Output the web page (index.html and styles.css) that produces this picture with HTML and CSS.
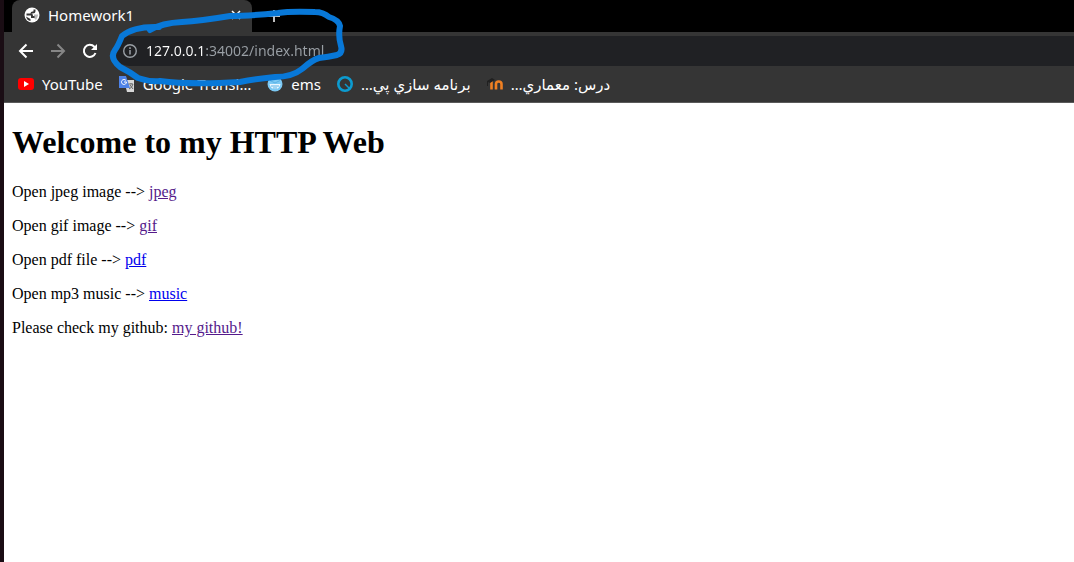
FILE: index.html
```html
<!DOCTYPE html>
<html lang="en">
<head>
<meta charset="utf-8">
<title>Homework1</title>
<link rel="stylesheet" href="styles.css">
</head>
<body>
<div class="browser">
  <header class="chrome">
    <div class="tabs">
      <div class="tab">
        <svg class="icon" viewBox="0 0 16 16"><circle cx="8" cy="8" r="7.500" fill="#fff"/><path d="M2.500 7.500H7q1 0 1 1.200V10h2.500M10.500 2.500V4q0 1.500-2 1.500-1 0-1 1" fill="none" stroke="#353535" stroke-width="2"/><path d="M10 7.500h4.200q-.5 3-2.200 5.500L10 11Z" fill="#353535" opacity=".35"/><path d="M2 9.500 6.500 12v2Q3 13.500 2 9.500Z" fill="#353535"/></svg>
        <span class="tab-title">Homework1</span>
        <button class="tab-button" aria-label="Close tab"><svg class="icon" viewBox="0 0 16 16"><path d="m4 4 8 8m0-8-8 8" stroke="#fff" stroke-width="1.500"/></svg></button>
      </div>
      <button class="tab-button new-tab" aria-label="New tab"><svg class="icon" viewBox="0 0 16 16"><path d="M8 2v12M2 8h12" stroke="#fff" stroke-width="1.500"/></svg></button>
    </div>
    <div class="toolbar">
      <button class="nav" aria-label="Back"><svg class="icon" viewBox="0 0 16 16"><path d="M15 8H2m6.500-6.500L2 8l6.500 6.500" fill="none" stroke="#fff" stroke-width="2"/></svg></button>
      <button class="nav" aria-label="Forward"><svg class="icon" viewBox="0 0 16 16"><path d="M1 8h13M7.500 1.500 14 8l-6.500 6.500" fill="none" stroke="#868686" stroke-width="2"/></svg></button>
      <button class="nav" aria-label="Reload"><svg class="icon" viewBox="0 0 16 16"><path d="M13.500 10A6 6 0 1 1 12.300 3.800L14 5.500" fill="none" stroke="#fff" stroke-width="2"/><path d="M15 1v6H9Z" fill="#fff"/></svg></button>
      <div class="omnibox">
        <svg class="icon" viewBox="0 0 16 16"><circle cx="8" cy="8" r="6.300" fill="none" stroke="#9aa0a6" stroke-width="1.400"/><path d="M8 7v4.500M8 4.300V6" stroke="#9aa0a6" stroke-width="1.500"/></svg>
        <input class="url" type="text" aria-label="Address" value="127.0.0.1:34002/index.html">
      </div>
    </div>
    <nav class="bookmarks">
      <a class="bookmark" href="#"><svg class="icon" viewBox="0 0 16 16"><rect y="2" width="16" height="12" rx="3" fill="#f00"/><path d="m6 5 5 3-5 3Z" fill="#fff"/></svg>YouTube</a>
      <a class="bookmark" href="#"><svg class="icon" viewBox="0 0 16 16"><path d="M5 4h10v12H8Z" fill="#d8d8d8"/><path d="M0 0h7l4 12H0Z" fill="#4e83e8"/><path d="M7 4.500A2.500 2.500 0 1 0 7.500 6H5" fill="none" stroke="#fff"/><path d="M9.500 8H14m-2-1v1m2 0q-1 4-4 5m1-4 3 4" fill="none" stroke="#666"/></svg>Google Transl…</a>
      <a class="bookmark" href="#"><svg class="icon" viewBox="0 0 16 16"><circle cx="8" cy="8" r="7.500" fill="#7cc9f4"/><path d="M2.500 8h11q-1 5-5.500 5T2.500 8Z" fill="#eaf7ff"/><path d="M3 4.500 8 7l5-2.500M4 10h8M6 12h4" fill="none" stroke="#5ab1e4"/></svg>ems</a>
      <a class="bookmark" href="#"><svg class="icon" viewBox="0 0 16 16"><circle cx="8" cy="8" r="6.700" fill="none" stroke="#0c9bd0" stroke-width="2.600"/><path d="m8 8 4 4" stroke="#0c9bd0" stroke-width="1.500"/></svg><bdi lang="fa">برنامه سازي پي…</bdi></a>
      <a class="bookmark" href="#"><svg class="icon" viewBox="0 0 16 16"><path d="M4.500 13.500V5m4.500 8.500V8q0-2.500 2.700-2.500T14.500 8v5.500" fill="none" stroke="#f08022" stroke-width="2.600"/><path d="m0 5 5-3 3 2-5 3-2-1v4H0Z" fill="#202020"/></svg><bdi lang="fa">درس: معماري…</bdi></a>
    </nav>
    <svg class="scribble" viewBox="0 0 250 90" aria-hidden="true"><path d="M59 27Q34 26 22 36Q18 46 15 50Q9 58 20 67Q30 72 38 78Q50 82 60 81Q90 85 140 82Q155 79 175 77Q192 77 202 69Q212 60 219 58Q228 57 237 55Q243 53 241 46Q238 36 240 26Q239 20 229 17Q223 12 215 12Q190 11 178 13Q148 16 130 16Q100 21 82 22Q62 23 50 30"/></svg>
  </header>
  <main class="page">
    <h1>Welcome to my HTTP Web</h1>
    <p>Open jpeg image --&gt; <a class="seen" href="#">jpeg</a></p>
    <p>Open gif image --&gt; <a class="seen" href="#">gif</a></p>
    <p>Open pdf file --&gt; <a class="fresh" href="#">pdf</a></p>
    <p>Open mp3 music --&gt; <a class="fresh" href="#">music</a></p>
    <p>Please check my github: <a class="seen" href="#">my github!</a></p>
  </main>
</div>
</body>
</html>
```
FILE: styles.css
```css
* { box-sizing: border-box; }
body { margin: 0; background: #fff; }
button { padding: 0; border: 0; background: none; }
.icon { display: block; flex: none; width: 16px; height: 16px; }
.browser { min-height: 100vh; border-left: 4px solid #1a0d14; }
.chrome {
  position: relative;
  background: #353535;
  border-bottom: 1px solid #5a5a5a;
  color: #fff;
  font: 15px/20px "Noto Sans", "DejaVu Sans", sans-serif;
}
.tabs { display: flex; align-items: center; height: 32px; padding-left: 8px; background: #000; }
.tab {
  display: flex;
  align-items: center;
  gap: 8px;
  width: 240px;
  height: 32px;
  padding: 0 8px 2px 12px;
  background: #353535;
  border-radius: 8px 8px 0 0;
}
.tab-title { flex: 1; }
.new-tab { margin-left: 14px; }
.toolbar { display: flex; align-items: center; gap: 16px; padding: 4px 0 0 14px; }
.omnibox {
  display: flex;
  flex: 1;
  align-items: center;
  gap: 8px;
  height: 30px;
  padding-left: 8px;
  border-radius: 15px 0 0 15px;
  background: #202124;
}
.url {
  flex: 1;
  min-width: 0;
  padding: 0;
  border: 0;
  outline: 0;
  background: linear-gradient(90deg, #fff 57px, #9aa0a6 57px) text;
  color: transparent;
  font: 14px/20px "Noto Sans", sans-serif;
}
.bookmarks { display: flex; align-items: center; gap: 16px; height: 36px; padding: 0 0 1px 14px; }
.bookmark { display: flex; align-items: center; gap: 8px; color: inherit; text-decoration: none; white-space: nowrap; }
.scribble { position: absolute; left: 96px; top: 0; width: 250px; height: 90px; pointer-events: none; }
.scribble path { fill: none; stroke: #0878d8; stroke-width: 6px; stroke-linecap: round; stroke-linejoin: round; }
.page { padding: 0 8px; color: #000; font: 16px/18px "Liberation Serif", serif; }
.page h1 { margin: 0; padding: 21px 0 22px; font-size: 32px; line-height: 37px; }
.page p { margin: 0 0 16px; }
.seen { color: #551a8b; }
.fresh { color: #0000ee; }
```
